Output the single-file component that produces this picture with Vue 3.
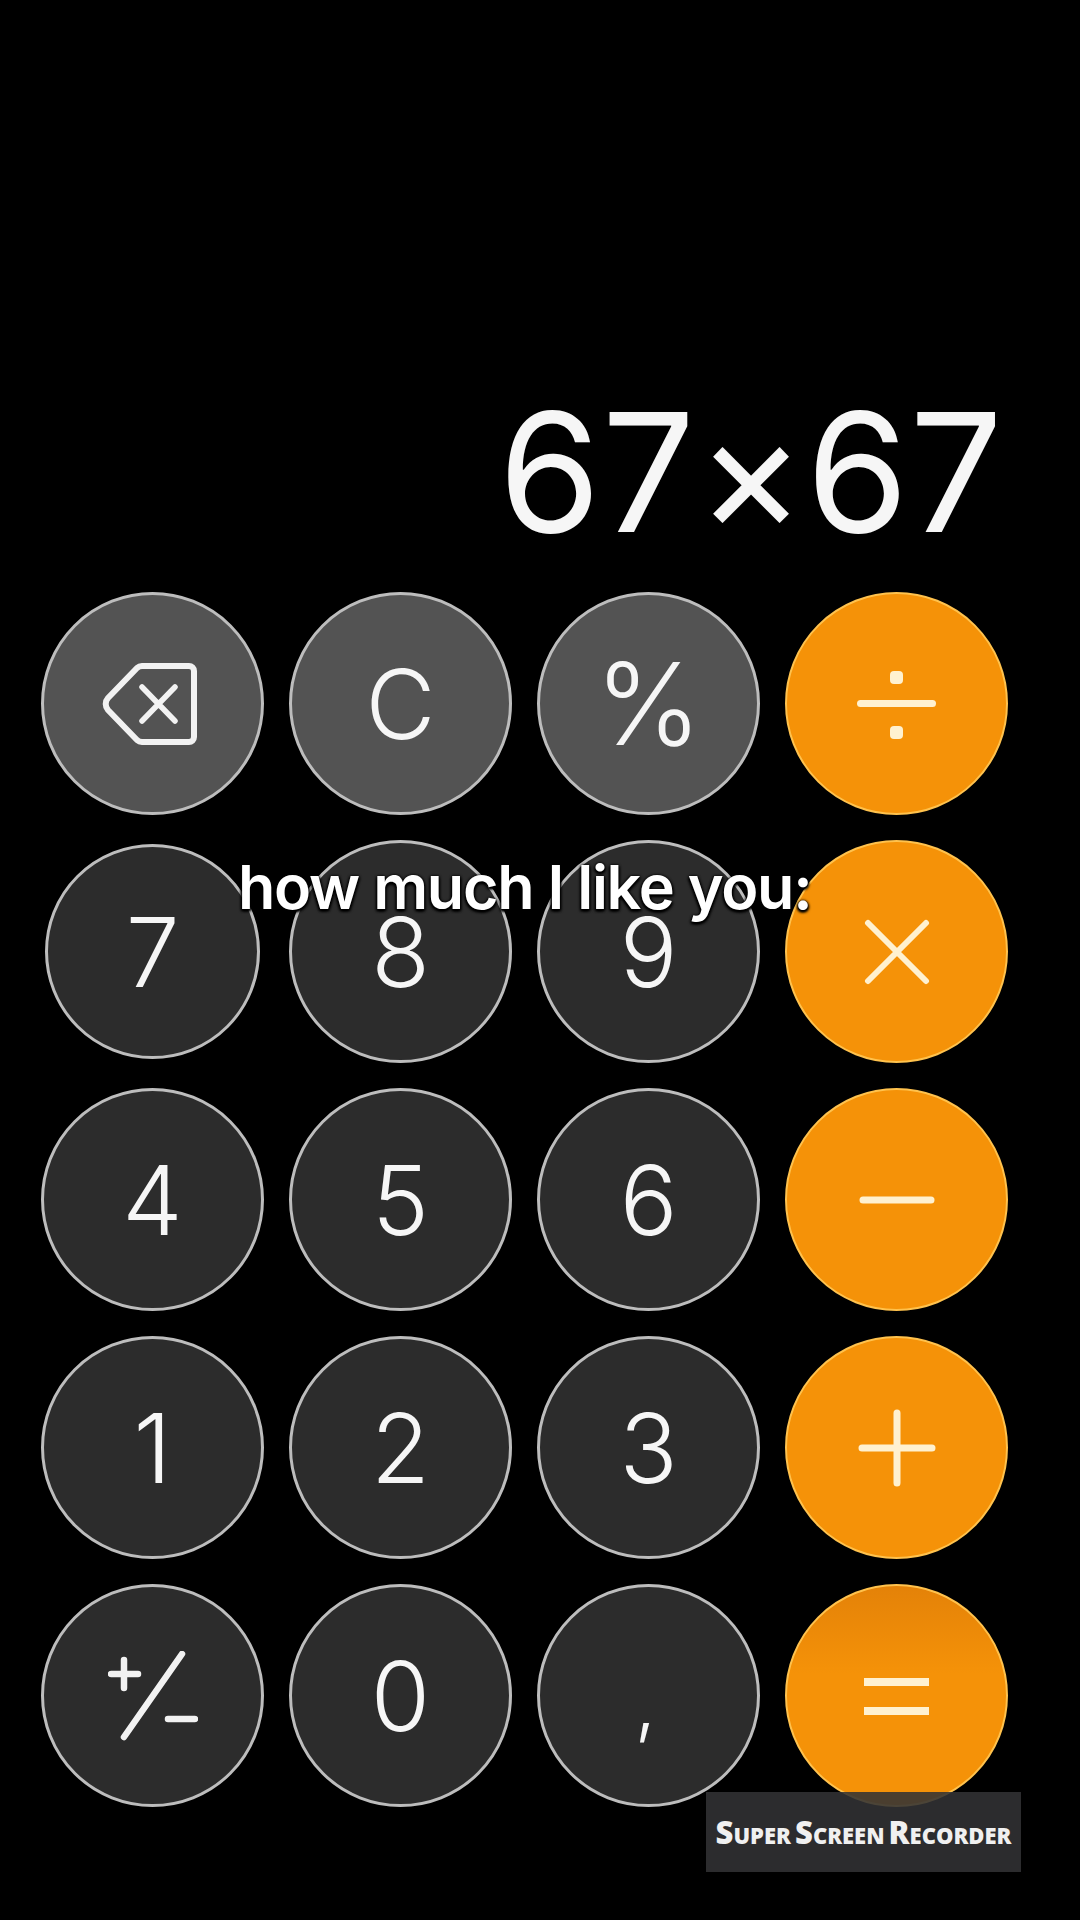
<script setup>
const keys = [
  { id: 'back', kind: 'func', icon: 'back' },
  { id: 'c', kind: 'func', label: 'C' },
  { id: 'pct', kind: 'func pct', label: '%' },
  { id: 'div', kind: 'op', icon: 'div' },
  { id: '7', kind: 'num small', label: '7' },
  { id: '8', kind: 'num', label: '8' },
  { id: '9', kind: 'num', label: '9' },
  { id: 'mul', kind: 'op', icon: 'mul' },
  { id: '4', kind: 'num', label: '4' },
  { id: '5', kind: 'num', label: '5' },
  { id: '6', kind: 'num', label: '6' },
  { id: 'sub', kind: 'op', icon: 'sub' },
  { id: '1', kind: 'num', label: '1' },
  { id: '2', kind: 'num', label: '2' },
  { id: '3', kind: 'num', label: '3' },
  { id: 'add', kind: 'op', icon: 'add' },
  { id: 'sign', kind: 'num', icon: 'sign' },
  { id: '0', kind: 'num', label: '0' },
  { id: 'comma', kind: 'num comma', label: ',' },
  { id: 'eq', kind: 'op eq', icon: 'eq' }
]
</script>

<template>
  <div class="screen">
    <div class="display">67×67</div>

    <div class="keypad">
      <div v-for="key in keys" :key="key.id" class="key" :class="key.kind">
        <span v-if="key.label">{{ key.label }}</span>

        <svg v-else-if="key.icon === 'back'" class="back-icon" width="96" height="84" viewBox="0 0 96 84" fill="none" stroke="#f2f2f2" stroke-width="6" stroke-linejoin="round" stroke-linecap="round">
          <path d="M40 4H87a5 5 0 0 1 5 5V75a5 5 0 0 1-5 5H40a8 8 0 0 1-5-2L6 48a9 9 0 0 1 0-12L35 6a8 8 0 0 1 5-2Z" />
          <path d="M40 25L73 59M73 25L40 59" stroke-width="5.5" />
        </svg>

        <svg v-else-if="key.icon === 'div'" width="80" height="80" viewBox="0 0 80 80" fill="#fff1d0" stroke="none">
          <rect x="0" y="36" width="79" height="7" rx="3.5" />
          <rect x="33" y="7" width="13" height="13" rx="4" />
          <rect x="33" y="62" width="13" height="13" rx="4" />
        </svg>

        <svg v-else-if="key.icon === 'mul'" width="66" height="66" viewBox="0 0 66 66" stroke="#fff1d0" stroke-width="6" stroke-linecap="round">
          <path d="M4 4L62 62M62 4L4 62" />
        </svg>

        <svg v-else-if="key.icon === 'sub'" width="76" height="8" viewBox="0 0 76 8" stroke="#fff1d0" stroke-width="7" stroke-linecap="round">
          <path d="M4 4H72" />
        </svg>

        <svg v-else-if="key.icon === 'add'" width="78" height="78" viewBox="0 0 78 78" stroke="#fff1d0" stroke-width="7" stroke-linecap="round">
          <path d="M4 39H74M39 4V74" />
        </svg>

        <svg v-else-if="key.icon === 'eq'" width="66" height="40" viewBox="0 0 66 40" fill="#fff1d0">
          <rect x="0" y="2" width="65" height="8" />
          <rect x="0" y="31" width="65" height="8" />
        </svg>

        <svg v-else-if="key.icon === 'sign'" width="90" height="90" viewBox="0 0 90 90" stroke="#f2f2f2" stroke-width="6.5" stroke-linecap="round" fill="none">
          <path d="M74 3L16 86" />
          <path d="M3 23H30M16 9V37" />
          <path d="M60 68H87" />
        </svg>
      </div>
    </div>

    <div class="caption">how much I like you:</div>

    <div class="watermark">Super Screen Recorder</div>
  </div>
</template>

<style scoped>
.screen {
  position: relative;
  width: 1080px;
  height: 1920px;
  background: #000;
  color: #f6f6f6;
  font-family: Inter, "Liberation Sans", sans-serif;
  overflow: hidden;
}

.display {
  height: 592px;
  box-sizing: border-box;
  padding: 0 76px 37px 0;
  display: flex;
  align-items: flex-end;
  justify-content: flex-end;
  font-size: 165px;
  font-weight: 400;
  line-height: 1;
  letter-spacing: 1px;
}

.keypad {
  display: grid;
  grid-template-columns: repeat(4, 223px);
  grid-auto-rows: 223px;
  gap: 25px;
  padding-left: 41px;
}

.key {
  box-sizing: border-box;
  width: 223px;
  height: 223px;
  border-radius: 50%;
  display: flex;
  align-items: center;
  justify-content: center;
  font-size: 96px;
  font-weight: 300;
  line-height: 1;
  border: 3px solid #bdbdbd;
}

.func {
  background: #535353;
}

.num {
  background: #2c2c2c;
}

.small {
  width: 215px;
  height: 215px;
  align-self: center;
  justify-self: center;
}

.pct {
  font-size: 114px;
}

.back-icon {
  margin-right: 6px;
}

.op {
  background: #f59208;
  border: 2px solid #ffc24d;
}

.eq {
  background: linear-gradient(#e48208, #f59208 40%);
}

.comma {
  font-size: 76px;
  align-items: flex-end;
  padding-bottom: 64px;
  padding-right: 6px;
}

.caption {
  position: absolute;
  left: 238px;
  top: 851px;
  font-size: 61px;
  font-weight: 600;
  letter-spacing: -1.25px;
  line-height: 72px;
  white-space: nowrap;
  color: #fff;
  text-shadow: 0 0 3px #000, 0 1px 3px #000, 1px 2px 3px #000, -1px 2px 3px #000;
}

.watermark {
  position: absolute;
  left: 706px;
  top: 1792px;
  width: 315px;
  height: 80px;
  display: flex;
  align-items: center;
  justify-content: center;
  background: rgba(50, 50, 52, 0.88);
  font-family: "Open Sans", "Liberation Sans", sans-serif;
  font-size: 31px;
  font-weight: 800;
  font-variant: small-caps;
  word-spacing: -4px;
  white-space: nowrap;
  color: #f0f0f0;
}
</style>
